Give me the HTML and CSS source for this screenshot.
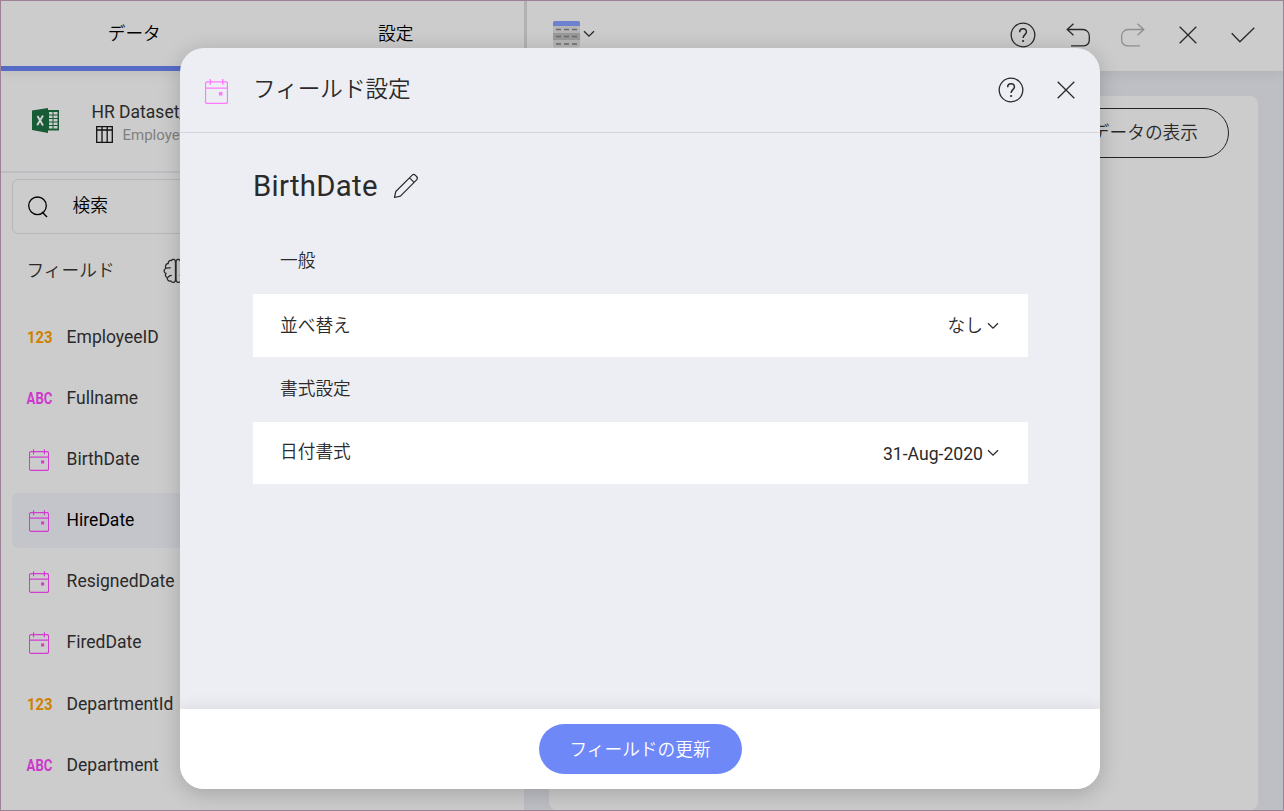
FILE: index.html
```html
<!DOCTYPE html>
<html lang="ja">
<head>
<meta charset="utf-8">
<title>フィールド設定</title>
<link rel="stylesheet" href="styles.css">
</head>
<body>
<svg class="defs" aria-hidden="true">
  <symbol id="calendar" viewBox="0 0 24 26"><path d="M2.500 3h19a2 2 0 0 1 2 2v18.500a2 2 0 0 1-2 2h-19a2 2 0 0 1-2-2V5a2 2 0 0 1 2-2zM.5 9.500h23M5.500 0v6M18.500 0v6" fill="none" stroke="currentColor" stroke-width="1.400"/><rect x="14.500" y="13.500" width="3.700" height="3.700" fill="currentColor"/></symbol>
  <symbol id="help" viewBox="0 0 26 26"><circle cx="13" cy="13" r="11.800" fill="none" stroke="currentColor" stroke-width="1.300"/><path d="M9.700 10.200c0-2.200 1.300-3.400 3.300-3.400s3.400 1.200 3.400 3.100c0 2.600-3.300 2.900-3.300 6.100" fill="none" stroke="currentColor" stroke-width="1.500"/><circle cx="13.100" cy="19" r="1.100" fill="currentColor"/></symbol>
  <symbol id="close" viewBox="0 0 18 18"><path d="M.7.7l16.600 16.600M17.300.7L.7 17.300" stroke="currentColor" stroke-width="1.300"/></symbol>
  <symbol id="undo" viewBox="0 0 24 24"><path d="M7.500.8L1.200 6.500l6.300 5.700M1.500 6.500h15.500a6.300 6.300 0 0 1 6.300 6.300v4.500a5.500 5.500 0 0 1-5.500 5.500H5" fill="none" stroke="currentColor" stroke-width="1.300"/></symbol>
  <symbol id="chevron" viewBox="0 0 12 8"><path d="M1 1.200l5 5 5-5" fill="none" stroke="currentColor" stroke-width="1.300"/></symbol>
</svg>
<div class="app">
  <header class="topbar">
    <nav class="tabs"><span class="tab active">データ</span><span class="tab">設定</span></nav>
    <div class="toolbar">
      <svg class="grid-icon" viewBox="0 0 27 27"><rect x="0" y="0" width="27" height="26.500" rx="2" fill="#b5b5b5"/><path d="M0 5V2q0-2 2-2h23q2 0 2 2v3z" fill="#6e81cf"/><rect y="12" width="27" height="7" fill="#999"/><path d="M3 8.500h21M3 15.500h21M3 23h21" stroke="#6b6b6b" stroke-width="1.500" stroke-dasharray="5 3"/></svg>
      <svg class="chev"><use href="#chevron"/></svg>
      <div class="actions">
        <svg class="i-help"><use href="#help"/></svg>
        <svg class="i-undo"><use href="#undo"/></svg>
        <svg class="i-undo redo"><use href="#undo"/></svg>
        <svg class="i-close"><use href="#close"/></svg>
        <svg class="i-check" viewBox="0 0 24 16"><path d="M.7 6.300l8.200 8.500L23.300.7" fill="none" stroke="currentColor" stroke-width="1.300"/></svg>
      </div>
    </div>
  </header>
  <div class="workspace">
    <aside class="sidebar">
      <div class="source">
        <svg class="excel" viewBox="0 0 27 25"><path d="M15 2h12v20.500H15z" fill="#185c37"/><path d="M17 4h8.500v16.500H17z" fill="#ccc"/><path d="M16 7h10M16 10.500h10M16 14h10M16 17.500h10M21 3.500v17.500" stroke="#185c37" stroke-width="1"/><path d="M0 2.500L16 0v25L0 22z" fill="#185c37"/><path d="M5.500 8l5.500 9.500M11 7.500L5.200 17.200" stroke="#d3d3d3" stroke-width="1.900"/></svg>
        <div class="source-text">
          <span class="source-name">HR Dataset_2020</span>
          <span class="sheet"><svg viewBox="0 0 17 17"><path d="M.7.7h15.600v15.600H.7zM.7 4h15.600M6 .7v15.600M11.200.7v15.600" fill="none" stroke="currentColor" stroke-width="1.300"/></svg>Employees</span>
        </div>
      </div>
      <div class="search"><svg viewBox="0 0 20 22"><circle cx="9.500" cy="9.800" r="8.800" fill="none" stroke="currentColor" stroke-width="1.300"/><path d="M14 16l5 5" stroke="currentColor" stroke-width="1.400"/></svg><span>検索</span></div>
      <div class="fields-head"><span>フィールド</span>
        <svg class="brain" viewBox="0 0 26 26"><path id="lobe" d="M12.500 4v18c0 2.500-3.200 3.300-4.700 1-2.400.4-3.900-1.100-3.500-3.300-1.900-.7-2.400-2.600-1.400-4.300C.5 14.500.5 11.500 2.800 10.200 1.900 7.800 3 5.700 5.200 5.500 5.200 3.200 6.700 2 8.500 2.500c1.100-2 4-1.200 4 1.500zM3 10.200c1.500-.5 3.300-.2 4.700-.6M8.800 17.300c-2 0-3.200.6-3.700 2.200" fill="none" stroke="currentColor" stroke-width="1.300"/><use href="#lobe" transform="matrix(-1 0 0 1 25.500 0)"/></svg>
      </div>
      <ul class="fields">
        <li><b class="num">123</b>EmployeeID</li>
        <li><b class="abc">ABC</b>Fullname</li>
        <li><svg><use href="#calendar"/></svg>BirthDate</li>
        <li class="selected"><svg><use href="#calendar"/></svg>HireDate</li>
        <li><svg><use href="#calendar"/></svg>ResignedDate</li>
        <li><svg><use href="#calendar"/></svg>FiredDate</li>
        <li><b class="num">123</b>DepartmentId</li>
        <li><b class="abc">ABC</b>Department</li>
      </ul>
    </aside>
    <main class="canvas"><div class="panel"><span class="show-data">データの表示</span></div></main>
  </div>
  <section class="dialog">
    <header class="dialog-head">
      <svg class="cal"><use href="#calendar"/></svg><h1>フィールド設定</h1>
      <svg class="i-help"><use href="#help"/></svg><svg class="i-close"><use href="#close"/></svg>
    </header>
    <div class="dialog-body">
      <h2>BirthDate<svg viewBox="0 0 26 26"><path d="M1.500 24.500l1.300-6L19 2.300q1.700-1.700 3.400 0l1.200 1.200q1.700 1.700 0 3.400L7.400 23.100zM16.500 4.800l4.600 4.600" fill="none" stroke="currentColor" stroke-width="1.200" stroke-linejoin="round"/></svg></h2>
      <h3>一般</h3>
      <div class="row"><span>並べ替え</span><span class="value">なし<svg><use href="#chevron"/></svg></span></div>
      <h3 class="second">書式設定</h3>
      <div class="row date"><span>日付書式</span><span class="value">31-Aug-2020<svg><use href="#chevron"/></svg></span></div>
    </div>
    <footer class="dialog-foot"><button>フィールドの更新</button></footer>
  </section>
</div>
</body>
</html>
```
FILE: styles.css
```css
* { box-sizing: border-box; }
body { margin: 0; font: 17.500px/24px Roboto, "Noto Sans CJK JP", sans-serif; color: #2a2a2a; }
svg { flex: none; overflow: visible; }
.defs { position: absolute; width: 0; height: 0; }
.app { position: relative; display: flex; flex-direction: column; width: 1284px; height: 811px; overflow: hidden; border: 1px solid #9c8294; background: #bdbfc4; }
.tab, .search, .fields-head, .show-data, h1, h3, .row, button { font-family: "Noto Sans CJK JP DemiLight", "Noto Sans CJK JP", sans-serif; font-size: 17.700px; font-weight: 350; }

.topbar { display: flex; flex: 0 0 70px; position: relative; background: #ccc; box-shadow: 0 2px 12px rgba(0,0,0,.08); }
.tabs { display: flex; width: 523px; }
.tab { flex: 1; height: 70px; padding-top: 19px; padding-left: 5px; text-align: center; color: #000; }
.tab.active { border-bottom: 5px solid #566bc5; }
.toolbar { display: flex; flex: 1; align-items: flex-start; padding: 20px 28.500px 0 26px; border-left: 3px solid #b2b2b2; color: #292929; }
.grid-icon { width: 27px; height: 27px; }
.chev { width: 12px; height: 8px; margin: 9px 0 0 3px; }
.actions { display: flex; align-items: center; margin-left: auto; height: 27px; }
.i-help { width: 26px; height: 26px; }
.i-undo { width: 24px; height: 24px; margin-left: 30px; }
.redo { margin-left: 31px; color: #8e8e8e; transform: scaleX(-1); }
.i-close { width: 18px; height: 18px; }
.actions .i-close { margin-left: 34px; }
.i-check { width: 24px; height: 16px; margin-left: 34px; }

.workspace { display: flex; flex: 1; min-height: 0; }
.sidebar { width: 523px; background: #ccc; }
.source { display: flex; height: 102px; padding: 37px 0 0 31px; border-bottom: 2px solid #bdbdc2; }
.excel { width: 27px; height: 25px; }
.source-text { display: flex; flex-direction: column; margin: -9px 0 0 32.500px; }
.source-name { padding-top: 1px; font-size: 17.500px; }
.sheet { display: flex; align-items: center; height: 21px; padding-left: 4px; font-size: 15px; color: #808080; }
.sheet svg { width: 17px; height: 17px; margin-right: 10px; color: #111; }
.search { display: flex; height: 55px; margin: 6px 11px 0; padding: 12px 0 0 15px; border: 1px solid #b7b7bb; border-radius: 6px; color: #000; }
.search svg { width: 20px; height: 22px; margin: 4px 24.500px 0 0; }
.fields-head { display: flex; height: 72px; padding: 23px 0 0 25.500px; }
.brain { width: 26px; height: 26px; margin: 1px 0 0 48px; }
.fields { list-style: none; margin: 0; padding: 3px 11px 0; }
.fields li { display: flex; align-items: center; height: 55px; margin-bottom: 6.200px; padding-left: 15px; border-radius: 6px; }
.fields b { flex: none; width: 39.600px; padding-top: 1px; font-size: 17px; font-weight: 700; transform: scaleX(.87); transform-origin: left; }
.fields svg { width: 20px; height: 22px; margin: 2px 17.600px 0 2px; color: #d13bd1; }
.num { color: #ce8000; }
.fields .abc { color: #cc39cc; transform: scaleX(.77) translateX(-.5px); }
.fields .selected { background: #c4c5cb; color: #000; }
.canvas { flex: 1; padding: 25px; }
.panel { display: flex; justify-content: flex-end; height: 714px; padding: 12px 29px; border-radius: 8px; background: #ccc; }
.show-data { width: 204px; height: 50px; padding: 10px 30px; border: 1.500px solid #242424; border-radius: 25px; text-align: right; white-space: nowrap; }

.dialog { position: absolute; left: 179px; top: 47px; display: flex; flex-direction: column; width: 920px; height: 741px; overflow: hidden; border-radius: 24px; background: #edeef4; box-shadow: 0 4px 22px rgba(0,0,0,.2); }
.dialog-head { display: flex; align-items: center; height: 85px; padding: 1px 25px 0 25px; border-bottom: 1px solid #d4d5da; }
.cal { width: 23px; height: 25px; margin-top: 2px; color: #ff79fc; }
h1 { flex: 1; margin: -5px 0 0 25px; font-size: 22.600px; line-height: 32px; }
.dialog-head .i-help, .dialog-head .i-close { margin-bottom: 1px; }
.dialog-head .i-close { margin-left: 33px; }
.dialog-body { flex: 1; padding: 33px 72px 0 73px; }
h2 { display: flex; align-items: center; margin: 0; height: 40px; font-size: 29.300px; font-weight: 400; letter-spacing: .3px; }
h2 svg { width: 26px; height: 26px; margin-left: 15px; }
h3 { height: 88px; margin: 0; padding: 41px 27px 0; }
.second { height: 65px; padding-top: 18px; }
.row { display: flex; justify-content: space-between; height: 63px; padding: 17.500px 29px 0 27px; background: #fff; }
.row.date { height: 62px; padding-top: 16px; }
.row.date .value { padding-top: 4px; font-family: Roboto, sans-serif; font-size: 17.600px; font-weight: 400; }
.value { display: flex; }
.value svg { width: 12px; height: 8px; margin: 10px 0 0 4px; }
.date .value svg { margin-top: 7px; }
.dialog-foot { display: flex; align-items: flex-start; justify-content: center; height: 80px; padding-top: 15px; background: #fff; box-shadow: 0 -3px 15px rgba(0,0,0,.08); }
button { width: 203px; height: 50px; padding: 0 0 3px; border: 0; border-radius: 25px; background: #6e88f8; color: #fff; }
```
